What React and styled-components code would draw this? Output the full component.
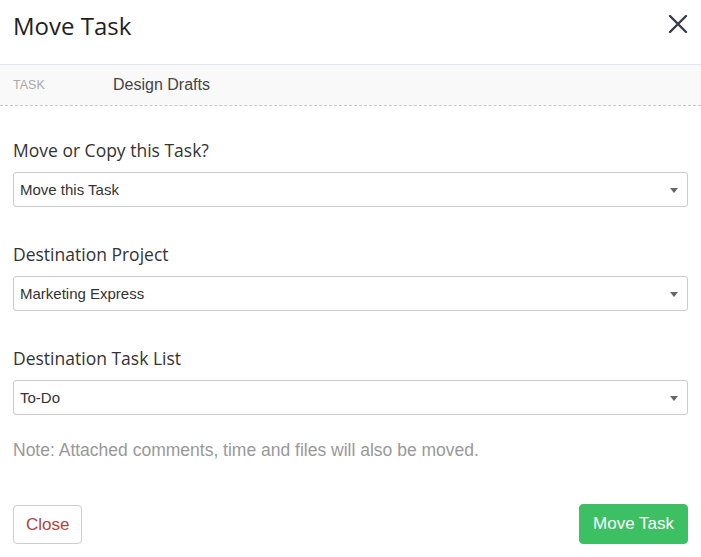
import styled, { createGlobalStyle } from "styled-components";

const GlobalStyle = createGlobalStyle`
  body {
    margin: 0;
    background: #fff;
    font-family: "Liberation Sans", Arial, sans-serif;
  }
`;

export const Modal = styled.div`
  width: 701px;
  height: 557px;
  display: flex;
  flex-direction: column;
`;

export const Header = styled.div`
  height: 54px;
  padding: 10px 13px 0;
  display: flex;
  align-items: flex-start;
  justify-content: space-between;
  border-bottom: 1px solid #dfe7f1;
`;

export const Title = styled.h1`
  margin: 0;
  font-family: "Open Sans", sans-serif;
  font-weight: 400;
  font-size: 24px;
  line-height: 32px;
  color: #1f1f1f;
`;

export const CloseIcon = styled.button`
  border: none;
  background: none;
  padding: 0;
  margin-top: 4px;
  width: 20px;
  height: 20px;
  display: flex;
  cursor: pointer;
`;

export const TaskRow = styled.div`
  height: 40px;
  padding: 0 13px;
  display: flex;
  align-items: center;
  background: #f9f9f9;
  border-bottom: 1px dashed #c8c8c8;
`;

export const TaskLabel = styled.span`
  width: 100px;
  font-size: 12.5px;
  color: #a8a8a8;
  text-transform: uppercase;
`;

export const TaskName = styled.span`
  font-size: 16px;
  color: #444;
`;

export const Body = styled.div`
  padding: 31px 13px 0;
  display: flex;
  flex-direction: column;
`;

export const Fields = styled.div`
  display: flex;
  flex-direction: column;
  gap: 34px;
`;

export const Field = styled.div`
  display: flex;
  flex-direction: column;
`;

export const Label = styled.label`
  font-family: "Open Sans", sans-serif;
  font-size: 17.5px;
  color: #333;
  line-height: 26px;
  margin-bottom: 9px;
`;

export const Select = styled.div`
  position: relative;
  height: 33px;
  padding: 0 6px;
  display: flex;
  align-items: center;
  border: 1px solid #cbcbcb;
  border-radius: 3px;
  font-size: 15px;
  color: #333;
`;

export const Caret = styled.span`
  position: absolute;
  right: 9px;
  top: 15px;
  width: 0;
  height: 0;
  border-left: 4px solid transparent;
  border-right: 4px solid transparent;
  border-top: 5px solid #666;
`;

export const Note = styled.p`
  margin: 25px 0 0;
  font-size: 17.5px;
  line-height: 20px;
  color: #999;
`;

export const Footer = styled.div`
  margin-top: auto;
  padding: 0 13px 13px;
  display: flex;
  justify-content: space-between;
  align-items: flex-end;
`;

export const Button = styled.button`
  height: ${(p) => (p.$primary ? "40px" : "39px")};
  padding: 0 ${(p) => (p.$primary ? "13px" : "12px")};
  border-radius: 4px;
  font-family: "Liberation Sans", Arial, sans-serif;
  font-size: 17px;
  cursor: pointer;
  border: 1px solid ${(p) => (p.$primary ? "#3dbf63" : "#cdcdcd")};
  background: ${(p) => (p.$primary ? "#3dbf63" : "#fff")};
  color: ${(p) => (p.$primary ? "#fff" : "#b2433f")};
`;

const fields = [
  { label: "Move or Copy this Task?", value: "Move this Task" },
  { label: "Destination Project", value: "Marketing Express" },
  { label: "Destination Task List", value: "To-Do" },
];

const App = () => {
  return (
    <>
      <GlobalStyle />
      <Modal>
        <Header>
          <Title>Move Task</Title>
          <CloseIcon aria-label="Close">
            <svg width="20" height="20" viewBox="0 0 20 20">
              <path
                d="M2 2 L18 18 M18 2 L2 18"
                stroke="#333c48"
                strokeWidth="2.4"
                strokeLinecap="round"
              />
            </svg>
          </CloseIcon>
        </Header>
        <TaskRow>
          <TaskLabel>Task</TaskLabel>
          <TaskName>Design Drafts</TaskName>
        </TaskRow>
        <Body>
          <Fields>
            {fields.map(({ label, value }) => (
              <Field key={label}>
                <Label>{label}</Label>
                <Select>
                  {value}
                  <Caret />
                </Select>
              </Field>
            ))}
          </Fields>
          <Note>Note: Attached comments, time and files will also be moved.</Note>
        </Body>
        <Footer>
          <Button>Close</Button>
          <Button $primary>Move Task</Button>
        </Footer>
      </Modal>
    </>
  );
};

export default App;
